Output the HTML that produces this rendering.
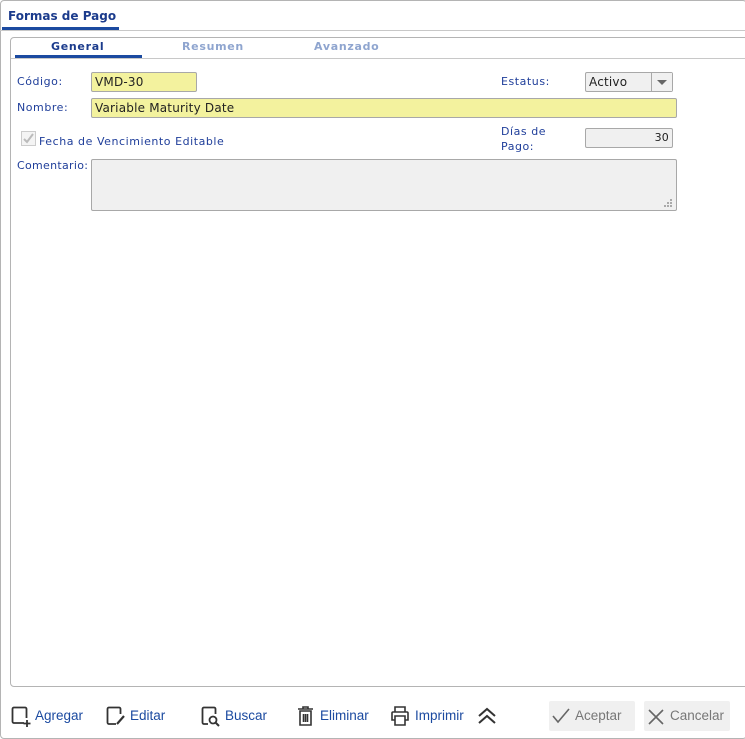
<!DOCTYPE html>
<html><head><meta charset="utf-8"><style>
*{box-sizing:border-box;margin:0;padding:0}
body{width:745px;height:739px;background:#fff;font-family:"DejaVu Sans","Liberation Sans",sans-serif;font-size:11px;color:#1f3e9a;position:relative;overflow:hidden}
.abs{position:absolute}
.outer{left:0;top:0;width:747px;height:739px;border:1px solid #b4b4b4;border-radius:4px;background:#fff}
.title{left:8px;top:9px;font-size:12px;font-weight:bold;color:#1b3b8c}
.tul{left:2px;top:27px;width:117px;height:3px;background:#1b4aa0}
.tline{left:0;top:30px;width:745px;height:1px;background:#c8c8c8}
.inner{left:10px;top:37px;width:740px;height:650px;border:1px solid #b4b4b4;border-radius:4px}
.tab{top:40px;font-size:11px;font-weight:bold;letter-spacing:.7px}
.gul{left:15px;top:55px;width:127px;height:3px;background:#1b4aa0}
.gline{left:11px;top:58px;width:734px;height:1px;background:#c8c8c8}
.lbl{font-size:11px;color:#1f3e9a;letter-spacing:.55px}
.inp{border:1px solid #a8a8a8;border-radius:2px;font-size:12px;color:#222;padding:1px 3px;line-height:16px;letter-spacing:.2px}
.y{background:#f3f29e}
.g{background:#f0f0f0}
.tb{top:708px;font-family:"Liberation Sans",sans-serif;font-size:13.5px;color:#1b4aa0}
.btn{top:701px;width:86px;height:30px;background:#f0f0f0;border-radius:2px;font-family:"Liberation Sans",sans-serif;font-size:13.5px;color:#777;line-height:30px}
</style></head><body>
<div class="abs outer"></div>
<div class="abs title">Formas de Pago</div>
<div class="abs tul"></div>
<div class="abs tline"></div>
<div class="abs inner"></div>
<div class="abs tab" style="left:51px;color:#1b3b8c">General</div>
<div class="abs tab" style="left:182px;color:#8fa5cf">Resumen</div>
<div class="abs tab" style="left:314px;color:#8fa5cf">Avanzado</div>
<div class="abs gul"></div>
<div class="abs gline"></div>

<div class="abs lbl" style="left:17px;top:75px">Código:</div>
<div class="abs inp y" style="left:91px;top:72px;width:106px;height:20px">VMD-30</div>
<div class="abs lbl" style="left:17px;top:101px">Nombre:</div>
<div class="abs inp y" style="left:91px;top:98px;width:586px;height:20px">Variable Maturity Date</div>
<div class="abs lbl" style="left:501px;top:75px">Estatus:</div>
<div class="abs inp g" style="left:585px;top:72px;width:88px;height:20px">Activo</div>
<div class="abs" style="left:651px;top:73px;width:21px;height:18px;border-left:1px solid #a8a8a8;background:#f0f0f0"></div>
<div class="abs" style="left:657px;top:80px;width:0;height:0;border-left:5px solid transparent;border-right:5px solid transparent;border-top:5px solid #666"></div>
<div class="abs" style="left:21px;top:131px;width:15px;height:15px;border:1px solid #ccc;background:#f4f4f4"></div>
<svg class="abs" style="left:22px;top:132px" width="13" height="13"><path d="M2 7 L5 10 L11 2" stroke="#bbb" stroke-width="2" fill="none"/></svg>
<div class="abs lbl" style="left:39px;top:135px">Fecha de Vencimiento Editable</div>
<div class="abs lbl" style="left:501px;top:124px;line-height:15px">Días de<br>Pago:</div>
<div class="abs inp g" style="left:585px;top:128px;width:88px;height:20px;text-align:right;font-size:11px">30</div>
<div class="abs lbl" style="left:17px;top:159px;letter-spacing:.3px">Comentario:</div>
<div class="abs inp g" style="left:91px;top:159px;width:586px;height:52px"></div>
<svg class="abs" style="left:662px;top:197px" width="12" height="12"><g fill="#aaa"><rect x="8" y="2" width="2" height="2"/><rect x="5" y="5" width="2" height="2"/><rect x="8" y="5" width="2" height="2"/><rect x="2" y="8" width="2" height="2"/><rect x="5" y="8" width="2" height="2"/><rect x="8" y="8" width="2" height="2"/></g></svg>

<svg class="abs" style="left:11px;top:706px" width="22" height="22"><path d="M13 17 H3 a1.5 1.5 0 0 1-1.5-1.5 V3 a1.5 1.5 0 0 1 1.5-1.5 H14 a1.5 1.5 0 0 1 1.5 1.5 V12" stroke="#333" stroke-width="1.8" fill="none"/><path d="M16 14 V21 M12.5 17.5 H19.5" stroke="#333" stroke-width="1.8"/></svg>
<div class="abs tb" style="left:35px">Agregar</div>
<svg class="abs" style="left:106px;top:706px" width="22" height="22"><path d="M10 18 H3 a1.5 1.5 0 0 1-1.5-1.5 V3 a1.5 1.5 0 0 1 1.5-1.5 H13 a1.5 1.5 0 0 1 1.5 1.5 V8" stroke="#333" stroke-width="1.8" fill="none"/><path d="M11 18 L18 10" stroke="#333" stroke-width="2.2"/></svg>
<div class="abs tb" style="left:130px">Editar</div>
<svg class="abs" style="left:201px;top:706px" width="22" height="22"><path d="M7 18 H3 a1.5 1.5 0 0 1-1.5-1.5 V3 a1.5 1.5 0 0 1 1.5-1.5 H13 a1.5 1.5 0 0 1 1.5 1.5 V8" stroke="#333" stroke-width="1.8" fill="none"/><circle cx="12" cy="14" r="3.5" stroke="#333" stroke-width="1.8" fill="none"/><path d="M14.5 16.5 L18 20" stroke="#333" stroke-width="2"/></svg>
<div class="abs tb" style="left:225px">Buscar</div>
<svg class="abs" style="left:296px;top:705px" width="22" height="22"><path d="M2 4 H17 M7 4 V2 H12 V4 M4 6 H15 V20 H4 Z M7.5 9 V17 M9.5 9 V17 M11.5 9 V17" stroke="#333" stroke-width="1.6" fill="none"/></svg>
<div class="abs tb" style="left:320px">Eliminar</div>
<svg class="abs" style="left:390px;top:705px" width="22" height="22"><path d="M5 7 V2 H15 V7 M5 15 H2 V8 a1 1 0 0 1 1-1 H17 a1 1 0 0 1 1 1 V15 H15 M5 11 H15 V20 H5 Z" stroke="#333" stroke-width="1.6" fill="none"/></svg>
<div class="abs tb" style="left:415px">Imprimir</div>
<svg class="abs" style="left:477px;top:707px" width="20" height="18"><path d="M2 9 L10 2 L18 9 M2 16 L10 9 L18 16" stroke="#333" stroke-width="2" fill="none"/></svg>

<div class="abs btn" style="left:549px"><svg class="abs" style="left:3px;top:7px" width="18" height="16"><path d="M1 8 L6 14 L17 1" stroke="#666" stroke-width="1.6" fill="none"/></svg><span style="position:absolute;left:26px">Aceptar</span></div>
<div class="abs btn" style="left:644px"><svg class="abs" style="left:4px;top:8px" width="16" height="16"><path d="M1 1 L15 15 M15 1 L1 15" stroke="#666" stroke-width="1.6"/></svg><span style="position:absolute;left:26px">Cancelar</span></div>
</body></html>
